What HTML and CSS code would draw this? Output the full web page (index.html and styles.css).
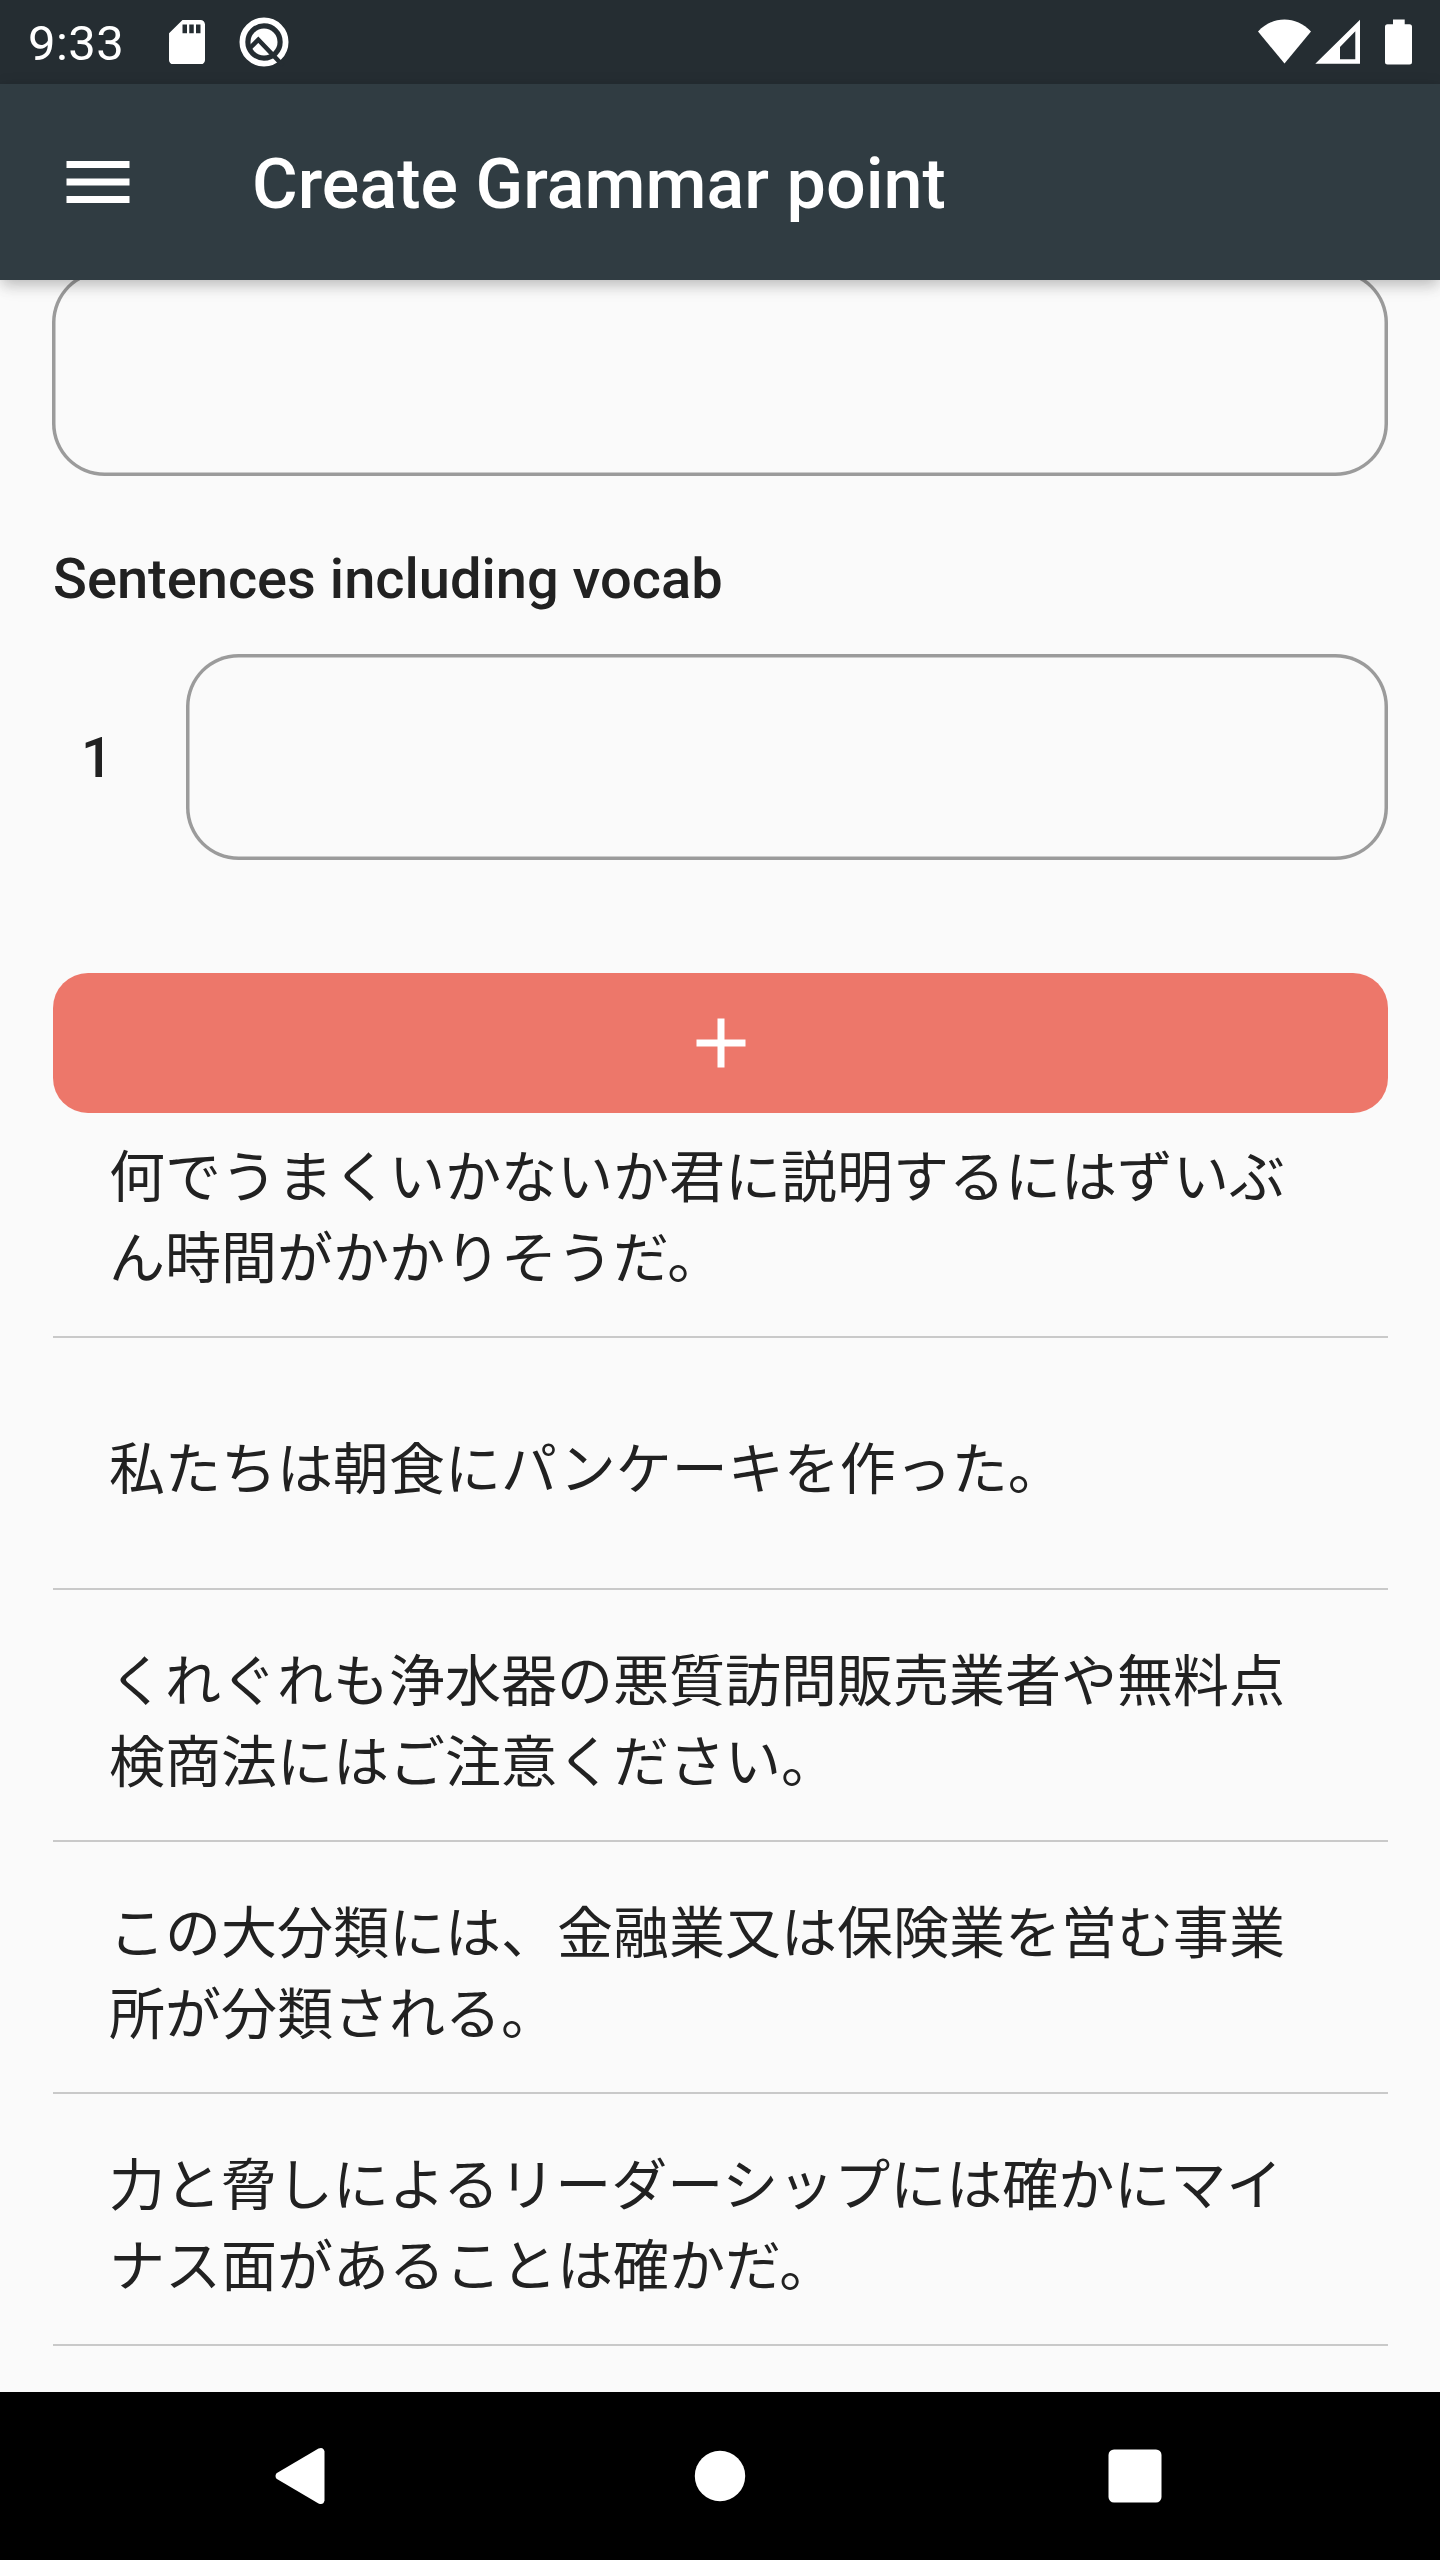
FILE: index.html
```html
<!DOCTYPE html>
<html lang="ja">
<head>
<meta charset="utf-8">
<title>Create Grammar point</title>
<link rel="stylesheet" href="styles.css">
</head>
<body>
<div class="screen">
  <div class="status-bar">
    <span class="clock">9:33</span>
    <svg class="sd-icon" viewBox="4 2 16 20" preserveAspectRatio="none"><path d="M18 2h-8L4.02 8 4 20c0 1.100.900 2 2 2h12c1.100 0 2-.900 2-2V4c0-1.100-.900-2-2-2zm-6 6h-2V4h2v4zm3 0h-2V4h2v4zm3 0h-2V4h2v4z"/></svg>
    <svg class="q-icon" viewBox="0 0 50 50">
      <circle class="ring" cx="25" cy="25" r="21.600"/>
      <circle cx="25" cy="25" r="13.500"/>
      <path class="cut" d="M10 32L19.300 22.700L44 48.500"/>
    </svg>
    <span class="spacer"></span>
    <svg class="signal-icons" viewBox="0 0 154 46">
      <path d="M0 12.500C15-3.500 38-3.500 53 12.500L26.500 44.500z"/>
      <path fill-rule="evenodd" d="M57.300 44.700L102 .800V44.700zM82 28V40.200H97.300V12.300z"/>
      <path d="M135 .500h11.700v4.800h4.800a2.500 2.500 0 0 1 2.500 2.500v35.200a2.500 2.500 0 0 1-2.500 2.500h-22a2.500 2.500 0 0 1-2.500-2.500v-35.200a2.500 2.500 0 0 1 2.500-2.500h5.500z"/>
    </svg>
  </div>
  <header class="app-bar">
    <svg class="menu-icon" viewBox="0 0 24 24"><path d="M3 18h18v-2H3v2zm0-5h18v-2H3v2zm0-7v2h18V6H3z"/></svg>
    <h1 class="title">Create Grammar point</h1>
  </header>
  <main class="content">
    <div class="field wide-field"></div>
    <h2 class="section-label">Sentences including vocab</h2>
    <div class="entry">
      <span class="entry-number">1</span>
      <div class="field entry-field"></div>
    </div>
    <div class="add-button"><svg class="add-icon" viewBox="0 0 24 24"><path d="M19 13h-6v6h-2v-6H5v-2h6V5h2v6h6v2z"/></svg></div>
    <ul class="sentences">
      <li class="sentence first">何でうまくいかないか君に説明するにはずいぶ<br>ん時間がかかりそうだ。</li>
      <li class="sentence">私たちは朝食にパンケーキを作った。</li>
      <li class="sentence">くれぐれも浄水器の悪質訪問販売業者や無料点<br>検商法にはご注意ください。</li>
      <li class="sentence">この大分類には、金融業又は保険業を営む事業<br>所が分類される。</li>
      <li class="sentence">力と脅しによるリーダーシップには確かにマイ<br>ナス面があることは確かだ。</li>
    </ul>
  </main>
  <nav class="nav-bar">
    <svg class="nav-icon" viewBox="5 0 60 60"><path d="M6.500 27.200Q4.500 30 6.500 32.800L48.500 57.500Q53.500 59.500 54.500 54.500V5.500Q53.500 .500 48.500 2.500z"/></svg>
    <svg class="nav-icon" viewBox="0 0 60 60"><circle cx="30" cy="30" r="25.200"/></svg>
    <svg class="nav-icon" viewBox="0 0 60 60"><rect x="3.500" y="3.400" width="53" height="53.200" rx="5.500"/></svg>
  </nav>
</div>
</body>
</html>
```
FILE: styles.css
```css
* { box-sizing: border-box; }

body {
  margin: 0;
  background: #fafafa;
  color: #212121;
  font-family: Roboto, "Noto Sans CJK JP", sans-serif;
}

svg { display: block; flex: none; fill: #fff; }

.screen {
  width: 1440px;
  height: 2560px;
  display: flex;
  flex-direction: column;
  overflow: hidden;
}

.status-bar {
  flex: none;
  height: 84px;
  padding: 0 28px;
  display: flex;
  align-items: center;
  background: #252d32;
  color: #fff;
}

.clock {
  width: 141px;
  padding-top: 4px;
  font-size: 49px;
  line-height: 80px;
  letter-spacing: .4px;
}

.sd-icon { width: 36px; height: 44.500px; }
.q-icon { width: 50px; height: 50px; margin-left: 34px; }
.ring { fill: none; stroke: #fff; stroke-width: 5.800; }
.cut { fill: none; stroke: #252d32; stroke-width: 4.500; }
.spacer { flex: 1; }
.signal-icons { width: 154px; height: 46px; }

.app-bar {
  flex: none;
  z-index: 1;
  height: 196px;
  padding-left: 56px;
  display: flex;
  align-items: center;
  gap: 112px;
  background: #303c42;
  color: #fff;
  box-shadow: 0 7px 14px -3px rgba(0, 0, 0, .18), 0 14px 17px rgba(0, 0, 0, .02), 0 3px 16px rgba(0, 0, 0, .1);
}

.menu-icon { width: 84px; height: 84px; }

.title {
  margin: 0;
  padding-top: 3px;
  font-size: 70px;
  font-weight: 500;
  line-height: 82px;
  letter-spacing: .04px;
}

.content {
  flex: 1;
  min-height: 0;
  margin-top: -10px;
  padding: 0 52px 0 53px;
  overflow: hidden;
}

.field {
  height: 206px;
  border-radius: 52.500px;
  box-shadow: inset 0 0 0 3.500px #9b9b9b;
}

.wide-field { margin-left: -1px; }

.section-label {
  margin: 70px 0 42px;
  font-size: 56px;
  font-weight: 500;
  line-height: 66px;
}

.entry { display: flex; align-items: center; }

.entry-number {
  width: 133px;
  padding: 2px 0 0 28px;
  font-size: 56px;
  font-weight: 500;
  line-height: 66px;
}

.entry-field { flex: 1; }

.add-button {
  height: 140px;
  margin-top: 113px;
  display: flex;
  align-items: center;
  justify-content: center;
  border-radius: 35px;
  background: #ed776a;
}

.add-icon { width: 84px; height: 84px; }

.sentences { margin: 0; padding: 0; list-style: none; }

.sentence {
  height: 252px;
  padding: 3px 56px 0;
  display: flex;
  align-items: center;
  border-bottom: 2px solid #c9c9c9;
  font-family: "Noto Sans CJK JP", sans-serif;
  font-size: 56px;
  line-height: 81px;
  white-space: nowrap;
}

.first { height: 225px; padding-top: 0; padding-bottom: 24px; }

.nav-bar {
  flex: none;
  height: 168px;
  padding: 0 275px;
  display: flex;
  align-items: center;
  justify-content: space-between;
  background: #000;
}

.nav-icon { width: 60px; height: 60px; }
```
